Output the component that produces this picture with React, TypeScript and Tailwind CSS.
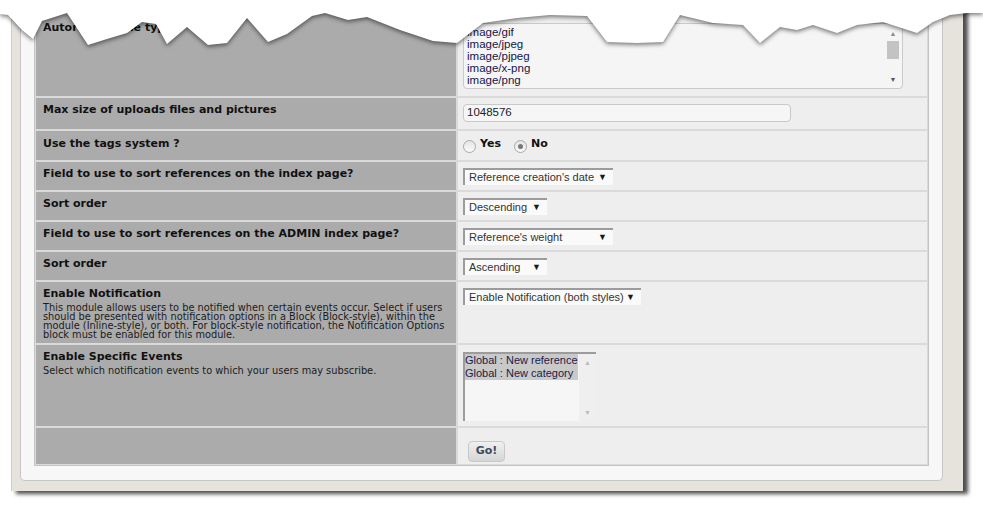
import type { ReactNode } from "react";

const LABEL = "font-['DejaVu_Sans',Verdana,sans-serif]";
const ARIAL = "font-['Liberation_Sans',Arial,sans-serif]";

function Label({ title, desc, top = "pt-[5px]" }: { title: string; desc?: string; top?: string }) {
  return (
    <div className={`bg-[#ababab] pl-[7px] pr-2 ${top} ${LABEL} text-[#111]`}>
      <div className="text-[11px] font-bold leading-[13px]">{title}</div>
      {desc && <div className="mt-[3px] text-[9.8px] leading-[9px] text-[#1b1b1b]">{desc}</div>}
    </div>
  );
}

function Value({ children, top = "pt-[6px]" }: { children?: ReactNode; top?: string }) {
  return <div className={`bg-[#eeeeee] pl-[5px] ${top}`}>{children}</div>;
}

function Select({ text, width }: { text: string; width: string }) {
  return (
    <div
      className={`${width} h-[17px] flex items-center justify-between bg-[#fafafa] border-t-2 border-l-2 border-[#9c9c9c] pl-[4px] pr-[6px] ${ARIAL} text-[11px] leading-[13px] text-[#333]`}
    >
      <span className="whitespace-nowrap">{text}</span>
      <span className="text-[9px] leading-none text-[#1a1a1a]">▼</span>
    </div>
  );
}

function Radio({ checked }: { checked?: boolean }) {
  return (
    <span className="mt-[3px] w-[13px] h-[13px] rounded-full border border-[#a9a9a9] bg-gradient-to-b from-[#e4e4e4] to-[#fbfbfb] flex items-center justify-center">
      {checked && <span className="w-[5px] h-[5px] rounded-full bg-[#777]" />}
    </span>
  );
}

const mimes = ["image/gif", "image/jpeg", "image/pjpeg", "image/x-png", "image/png"];

const edge =
  "0,0 983,0 983,13 967,13 950,15 933,22 917,33 883,22 857,25 837,33 813,25 797,30 780,27 760,43 743,25 713,23 680,15 663,42 637,43 607,42 587,16 550,15 517,18 483,23 457,43 433,41 400,30 367,17 348,20 325,13 312,16 287,34 268,42 247,18 227,43 208,45 187,27 167,44 156,24 142,22 127,33 107,39 88,45 67,13 42,21 33,39 22,30 8,15 0,14";

export default function App() {
  return (
    <div className="relative w-[983px] h-[511px] bg-white overflow-hidden">
      <div className="ml-[11px] w-[952px] h-[491px] bg-[#e6e3dc] border-l border-[#d2cfc8] shadow-[5px_3px_4px_rgba(0,0,0,0.7)] pl-[8px] pr-[20px] pb-[10px]">
        <div className="h-full bg-[#f7f7f7] border border-t-0 border-[#c6c6c6] rounded-b-[5px] pl-[13px] pr-[13px] pb-[14px]">
          <div className="h-full bg-[#dadada] border border-t-0 border-[#c4c4c4] px-[1px] pb-[1px] grid grid-cols-[420px_1fr] grid-rows-[96px_31px_29px_28px_28px_28px_28px_61px_81px_36px] gap-[2px]">
            <Label title="Autorized mime types" top="pt-[21px]" />
            <Value top="pt-[23px]">
              <div className="relative w-[440px] h-[66px] bg-[#f5f5f5] border border-[#cacaca] rounded-[4px] pl-[3px] pt-[2px]">
                <div className={`${ARIAL} text-[11.5px] leading-[12px] text-[#16164a]`}>
                  {mimes.map((m) => (
                    <div key={m}>{m}</div>
                  ))}
                </div>
                <div className="absolute right-[3px] top-[6px] bottom-[4px] w-[12px] flex flex-col items-center justify-between">
                  <span className="text-[7px] leading-[8px] text-[#888]">▲</span>
                  <span className="absolute top-[11px] w-[12px] h-[18px] bg-[#c3c3c3]" />
                  <span className="text-[7px] leading-[8px] text-[#555]">▼</span>
                </div>
              </div>
            </Value>

            <Label title="Max size of uploads files and pictures" />
            <Value>
              <div className={`w-[328px] h-[18px] bg-[#f6f6f6] border border-[#c9c9c9] rounded-[4px] pl-[3px] flex items-center ${ARIAL} text-[11.5px] text-[#222]`}>
                1048576
              </div>
            </Value>

            <Label title="Use the tags system ?" top="pt-[6px]" />
            <Value top="pt-[6px]">
              <div className={`flex items-start leading-[13px] ${LABEL} text-[11px] font-bold text-[#111]`}>
                <Radio />
                <span className="ml-[4px]">Yes</span>
                <span className="ml-[13px]">
                  <Radio checked />
                </span>
                <span className="ml-[4px]">No</span>
              </div>
            </Value>

            <Label title="Field to use to sort references on the index page?" />
            <Value>
              <Select text="Reference creation's date" width="w-[150px]" />
            </Value>

            <Label title="Sort order" />
            <Value>
              <Select text="Descending" width="w-[84px]" />
            </Value>

            <Label title="Field to use to sort references on the ADMIN index page?" />
            <Value>
              <Select text="Reference's weight" width="w-[150px]" />
            </Value>

            <Label title="Sort order" />
            <Value>
              <Select text="Ascending" width="w-[84px]" />
            </Value>

            <Label
              title="Enable Notification"
              desc="This module allows users to be notified when certain events occur. Select if users should be presented with notification options in a Block (Block-style), within the module (Inline-style), or both. For block-style notification, the Notification Options block must be enabled for this module."
            />
            <Value>
              <Select text="Enable Notification (both styles)" width="w-[178px]" />
            </Value>

            <Label title="Enable Specific Events" desc="Select which notification events to which your users may subscribe." />
            <Value top="pt-[7px]">
              <div className="relative w-[133px] h-[69px] bg-[#f6f6f6] border-t-2 border-l-2 border-[#9c9c9c]">
                <div className={`w-[113px] ${ARIAL} text-[11px] leading-[13px] text-[#1c1c4a] bg-[#f6f6f6]`}>
                  <div className="bg-[#c9c9c9] whitespace-nowrap">Global : New reference</div>
                  <div className="bg-[#c9c9c9] whitespace-nowrap">Global : New category</div>
                </div>
                <div className="absolute right-0 top-0 bottom-0 w-[17px] bg-[#efefef] flex flex-col items-center justify-between pt-[5px] pb-[4px]">
                  <span className="text-[7px] leading-[8px] text-[#bbb]">▲</span>
                  <span className="text-[7px] leading-[8px] text-[#bbb]">▼</span>
                </div>
              </div>
            </Value>

            <div className="bg-[#ababab]" />
            <Value top="pt-[8px]">
              <button className={`ml-[5px] w-[37px] h-[21px] rounded-[4px] border border-[#c8c8c8] bg-gradient-to-b from-[#f0f0f0] to-[#d6d6d6] ${LABEL} text-[11px] font-bold text-[#3d4b5c]`}>
                Go!
              </button>
            </Value>
          </div>
        </div>
      </div>

      <svg className="absolute left-0 top-0 drop-shadow-[0_2px_2px_rgba(0,0,0,0.5)]" width="983" height="60" viewBox="0 0 983 60">
        <polygon points={edge} fill="#ffffff" />
      </svg>
    </div>
  );
}
